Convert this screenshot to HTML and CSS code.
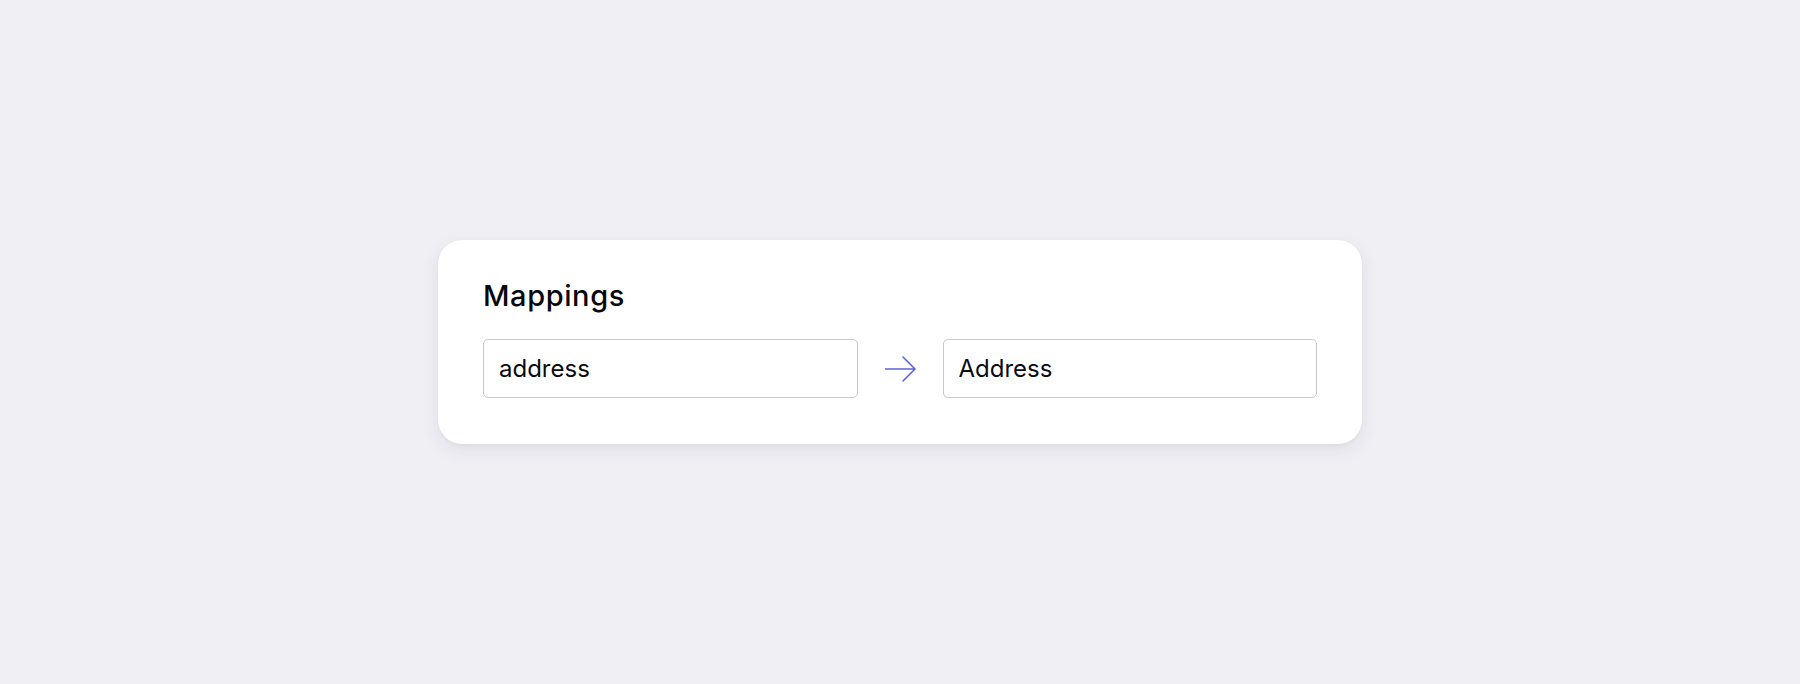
FILE: index.html
```html
<!DOCTYPE html>
<html lang="en">
<head>
<meta charset="utf-8">
<title>Mappings</title>
<link rel="stylesheet" href="styles.css">
</head>
<body>
<main class="page">
  <section class="card">
    <h2 class="card-title">Mappings</h2>
    <div class="mapping-row">
      <input class="field" type="text" value="address">
      <svg class="arrow" width="31" height="26" viewBox="0 0 31 26" aria-hidden="true">
        <path d="M0.5 13H30M18 1L30 13L18 25" fill="none" stroke="#5b63d6" stroke-width="1.6" stroke-linecap="round" stroke-linejoin="round"/>
      </svg>
      <input class="field" type="text" value="Address">
    </div>
  </section>
</main>
</body>
</html>
```
FILE: styles.css
```css
html, body {
  margin: 0;
  padding: 0;
  height: 100%;
}
body {
  background: #efeff4;
  font-family: Inter, "Noto Sans", sans-serif;
  color: #0b0b0f;
}
.page {
  height: 100%;
  display: flex;
  align-items: center;
  justify-content: center;
}
.card {
  width: 924px;
  box-sizing: border-box;
  padding: 38px 45px 46px;
  background: #ffffff;
  border-radius: 24px;
  box-shadow: 0 6px 18px rgba(40, 40, 70, 0.08), 0 1px 3px rgba(40, 40, 70, 0.05);
}
.card-title {
  margin: 0 0 26px;
  font-size: 29px;
  font-weight: 500;
  line-height: 35px;
  letter-spacing: 0.6px;
  color: #08080c;
}
.mapping-row {
  display: flex;
  align-items: center;
  gap: 27px;
}
.field {
  flex: 1;
  min-width: 0;
  height: 59px;
  box-sizing: border-box;
  margin: 0;
  padding: 0 15px;
  border: 1px solid #c8c8d3;
  border-radius: 5px;
  background: #ffffff;
  font-family: Inter, "Noto Sans", sans-serif;
  font-size: 24px;
  color: #0b0b0f;
  outline: none;
}
.arrow {
  flex: none;
  display: block;
}
```
